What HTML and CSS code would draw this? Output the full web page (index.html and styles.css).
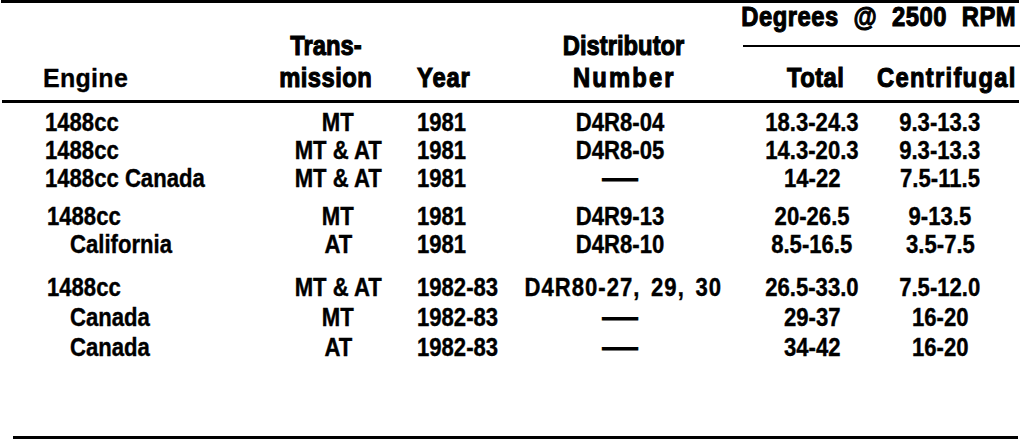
FILE: index.html
```html
<!DOCTYPE html>
<html>
<head>
<meta charset="utf-8">
<link rel="stylesheet" href="styles.css">
</head>
<body>
<div class="sheet">
  <div class="rule rule-top"></div>
  <div class="head">
    <div class="hc h-deg">Degrees @ 2500 RPM</div>
    <div class="deg-line"></div>
    <div class="hc h-trans1">Trans-</div>
    <div class="hc h-dist1">Distributor</div>
    <div class="h-engine">Engine</div>
    <div class="hc h-trans2">mission</div>
    <div class="hc h-year">Year</div>
    <div class="hc h-dist2">Number</div>
    <div class="hc h-total">Total</div>
    <div class="hc h-cent">Centrifugal</div>
  </div>
  <div class="rule rule-mid"></div>
  <div class="body">
    <div class="group g1">
      <div class="row"><span class="c-eng">1488cc</span><span class="c-tr">MT</span><span class="c-yr">1981</span><span class="c-di">D4R8-04</span><span class="c-to">18.3-24.3</span><span class="c-ce">9.3-13.3</span></div>
      <div class="row"><span class="c-eng">1488cc</span><span class="c-tr">MT &amp; AT</span><span class="c-yr">1981</span><span class="c-di">D4R8-05</span><span class="c-to">14.3-20.3</span><span class="c-ce">9.3-13.3</span></div>
      <div class="row"><span class="c-eng">1488cc Canada</span><span class="c-tr">MT &amp; AT</span><span class="c-yr">1981</span><span class="c-di dash">—</span><span class="c-to">14-22</span><span class="c-ce">7.5-11.5</span></div>
    </div>
    <div class="group g2">
      <div class="row"><span class="c-eng shift">1488cc</span><span class="c-tr">MT</span><span class="c-yr">1981</span><span class="c-di">D4R9-13</span><span class="c-to">20-26.5</span><span class="c-ce">9-13.5</span></div>
      <div class="row"><span class="c-eng sub">California</span><span class="c-tr">AT</span><span class="c-yr">1981</span><span class="c-di">D4R8-10</span><span class="c-to">8.5-16.5</span><span class="c-ce">3.5-7.5</span></div>
    </div>
    <div class="group g3">
      <div class="row"><span class="c-eng shift">1488cc</span><span class="c-tr">MT &amp; AT</span><span class="c-yr">1982-83</span><span class="c-di wide">D4R80-27, 29, 30</span><span class="c-to">26.5-33.0</span><span class="c-ce">7.5-12.0</span></div>
      <div class="row"><span class="c-eng sub">Canada</span><span class="c-tr">MT</span><span class="c-yr">1982-83</span><span class="c-di dash">—</span><span class="c-to">29-37</span><span class="c-ce">16-20</span></div>
      <div class="row"><span class="c-eng sub">Canada</span><span class="c-tr">AT</span><span class="c-yr">1982-83</span><span class="c-di dash">—</span><span class="c-to">34-42</span><span class="c-ce">16-20</span></div>
    </div>
  </div>
  <div class="spacer"></div>
  <div class="rule rule-bottom"></div>
</div>
</body>
</html>
```
FILE: styles.css
```css
html, body {
  margin: 0;
  padding: 0;
  background: #fff;
}
.sheet {
  width: 1024px;
  height: 442px;
  display: flex;
  flex-direction: column;
  color: #000;
  font-family: "Liberation Sans", Arial, sans-serif;
  font-weight: bold;
  overflow: hidden;
}
.rule {
  height: 3px;
  background: #000;
  flex: none;
}
.rule-top {
  margin: 0 5px 0 1px;
}
.rule-mid {
  margin: 0 5px 0 2px;
}
.rule-bottom {
  margin: 0 6px 3px 13px;
}

/* ---------- header ---------- */
.head {
  height: 97px;
  flex: none;
  box-sizing: border-box;
  padding-bottom: 6px;
  display: grid;
  grid-template-columns: 276px 100px 134px 228px 139px 143px;
  grid-template-rows: 27px 32px 32px;
  align-items: center;
}
.hc {
  font-size: 28px;
  line-height: 32px;
  white-space: nowrap;
  -webkit-text-stroke: 1.1px #000;
  transform: scaleX(0.85);
  justify-self: unsafe center;
}
.h-deg {
  grid-column: 5 / 7;
  grid-row: 1;
  margin-left: 0;
  word-spacing: 9px;
  letter-spacing: 0.6px;
}
.deg-line {
  grid-column: 5 / 7;
  grid-row: 2;
  height: 2px;
  margin-left: 5px;
  background: #000;
}
.h-trans1 {
  grid-column: 2;
  grid-row: 2;
}
.h-dist1 {
  grid-column: 4;
  grid-row: 2;
}
.h-engine {
  grid-column: 1;
  grid-row: 3;
  justify-self: start;
  margin-left: 43px;
  font-size: 25px;
  line-height: 32px;
  letter-spacing: 0.3px;
  -webkit-text-stroke: 0.3px #000;
}
.h-trans2 {
  grid-column: 2;
  grid-row: 3;
  letter-spacing: 0.5px;
}
.h-year {
  grid-column: 3;
  grid-row: 3;
  justify-self: start;
  margin-left: 41px;
  transform-origin: left center;
  letter-spacing: 1px;
}
.h-dist2 {
  grid-column: 4;
  grid-row: 3;
  letter-spacing: 2.5px;
}
.h-total {
  grid-column: 5;
  grid-row: 3;
  margin-left: 17px;
  letter-spacing: 0.5px;
}
.h-cent {
  grid-column: 6;
  grid-row: 3;
  justify-self: start;
  transform-origin: left center;
  letter-spacing: 1.5px;
}

/* ---------- body ---------- */
.body {
  flex: none;
  padding-top: 5px;
  display: flex;
  flex-direction: column;
}
.group {
  display: flex;
  flex-direction: column;
}
.g2 {
  margin-top: 10px;
}
.g3 {
  margin-top: 14px;
}
.row {
  display: grid;
  grid-template-columns: 276px 124px 110px 220px 164px 92px;
  height: 28px;
  line-height: 28px;
  font-size: 26px;
}
.g3 .row {
  height: 30px;
  line-height: 30px;
}
.row span {
  white-space: nowrap;
  justify-self: unsafe center;
  transform: scaleX(0.85);
  -webkit-text-stroke: 0.4px #000;
}
.row .c-eng {
  justify-self: start;
  margin-left: 45px;
  transform-origin: left center;
}
.row .c-eng.shift {
  margin-left: 47px;
}
.row .c-eng.sub {
  margin-left: 70px;
}
.row .c-yr {
  justify-self: start;
  margin-left: 17px;
  transform-origin: left center;
}
.row .c-di.dash {
  transform: scaleX(1.35);
  -webkit-text-stroke: 1px #000;
}
.row .c-di.wide {
  word-spacing: 4px;
  letter-spacing: 1.2px;
  margin-left: 6px;
}
.spacer {
  flex: 1;
}
```
